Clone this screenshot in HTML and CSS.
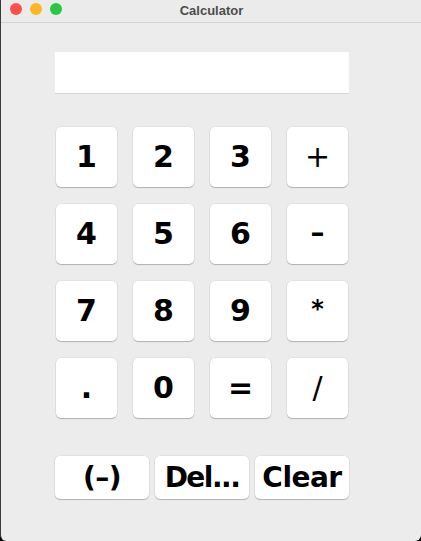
FILE: index.html
```html
<!DOCTYPE html>
<html>
<head>
<meta charset="utf-8">
<link rel="stylesheet" href="styles.css">
</head>
<body>
<div class="window">
  <div class="titlebar">
    <div class="lights">
      <span class="light red"></span>
      <span class="light yellow"></span>
      <span class="light green"></span>
    </div>
    <div class="title">Calculator</div>
  </div>
  <div class="content">
    <div class="display"></div>
    <div class="keys">
      <button class="key">1</button>
      <button class="key">2</button>
      <button class="key">3</button>
      <button class="key op">+</button>
      <button class="key">4</button>
      <button class="key">5</button>
      <button class="key">6</button>
      <button class="key minus">–</button>
      <button class="key">7</button>
      <button class="key">8</button>
      <button class="key">9</button>
      <button class="key op star">*</button>
      <button class="key">.</button>
      <button class="key">0</button>
      <button class="key">=</button>
      <button class="key op">/</button>
    </div>
    <div class="actions">
      <button class="action">(–)</button>
      <button class="action del">Del...</button>
      <button class="action">Clear</button>
    </div>
  </div>
</div>
</body>
</html>
```
FILE: styles.css
```css
html, body {
  margin: 0;
  padding: 0;
  background: #000;
}
.window {
  width: 421px;
  height: 541px;
  background: #ececec;
  border-left: 1px solid #3a3a3a;
  box-sizing: border-box;
  border-radius: 0 0 6px 6px;
  overflow: hidden;
  display: flex;
  flex-direction: column;
}
.titlebar {
  height: 22px;
  border-bottom: 1px solid #d3d3d3;
  position: relative;
  display: flex;
  align-items: center;
  justify-content: center;
  background: #ebebeb;
  flex-shrink: 0;
}
.lights {
  position: absolute;
  left: 9px;
  top: 3px;
  display: flex;
  gap: 8px;
}
.light {
  width: 12px;
  height: 12px;
  border-radius: 50%;
  display: block;
}
.red { background: #fe4f4a; }
.yellow { background: #fdb724; }
.green { background: #28c840; }
.title {
  font-family: "Liberation Sans", Arial, sans-serif;
  font-weight: bold;
  font-size: 13px;
  color: #4b4b4b;
  margin-left: 1px;
  margin-top: -2px;
}
.content {
  padding: 29px 0 0 54px;
  display: flex;
  flex-direction: column;
}
.display {
  width: 294px;
  height: 41px;
  background: #fff;
  border-bottom: 1px solid #d4d4d4;
}
.keys {
  margin-top: 33px;
  margin-left: 1px;
  display: grid;
  grid-template-columns: repeat(4, 61px);
  grid-auto-rows: 60px;
  column-gap: 16px;
  row-gap: 17px;
}
button {
  font-family: "DejaVu Sans", sans-serif;
  font-weight: bold;
  color: #000;
  background: #fff;
  border: none;
  border-radius: 5px;
  box-shadow: 0 1px 1px rgba(0, 0, 0, 0.22), 0 0 0 0.5px rgba(0, 0, 0, 0.08);
  padding: 0;
  margin: 0;
  display: flex;
  align-items: center;
  justify-content: center;
}
.key {
  font-size: 30px;
  line-height: 1;
}
.op {
  font-weight: normal;
  font-size: 30px;
}
.minus {
  font-size: 28px;
  padding-bottom: 2px;
}
.star {
  font-weight: bold;
  font-size: 24px;
  align-items: flex-start;
  padding-top: 16px;
}
.actions {
  margin-top: 38px;
  display: flex;
  gap: 6px;
}
.action {
  width: 94px;
  height: 43px;
  font-size: 28px;
  letter-spacing: -0.5px;
}
.del {
  letter-spacing: -1.5px;
}
```
